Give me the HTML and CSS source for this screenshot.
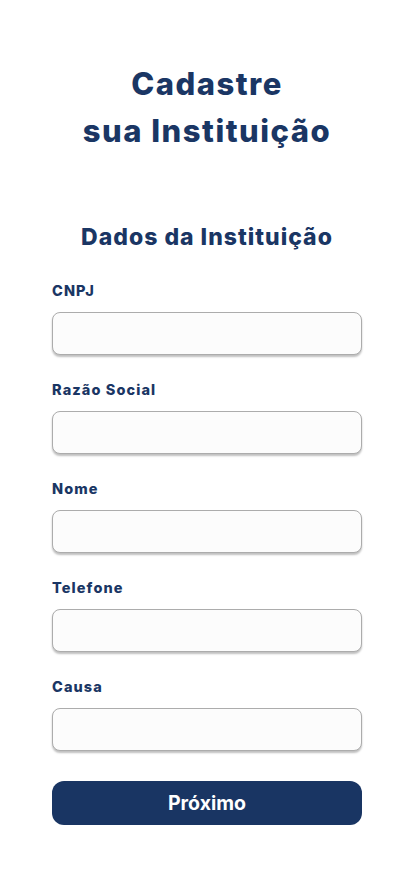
FILE: index.html
```html
<!DOCTYPE html>
<html lang="pt-BR">
<head>
<meta charset="utf-8">
<meta name="viewport" content="width=device-width, initial-scale=1">
<title>Cadastre sua Instituição</title>
<link rel="stylesheet" href="styles.css">
</head>
<body>
<main class="page">
  <h1 class="title">Cadastre<br>sua Instituição</h1>
  <form class="form">
    <h2 class="subtitle">Dados da Instituição</h2>
    <div class="field">
      <label class="label" for="cnpj">CNPJ</label>
      <input class="input" id="cnpj" type="text">
    </div>
    <div class="field">
      <label class="label" for="razao">Razão Social</label>
      <input class="input" id="razao" type="text">
    </div>
    <div class="field">
      <label class="label" for="nome">Nome</label>
      <input class="input" id="nome" type="text">
    </div>
    <div class="field">
      <label class="label" for="tel">Telefone</label>
      <input class="input" id="tel" type="text">
    </div>
    <div class="field">
      <label class="label" for="causa">Causa</label>
      <input class="input" id="causa" type="text">
    </div>
    <button class="button" type="button">Próximo</button>
  </form>
</main>
</body>
</html>
```
FILE: styles.css
```css
* { box-sizing: border-box; }
html, body { margin: 0; padding: 0; background: #ffffff; }
body { font-family: "Inter", "DejaVu Sans", sans-serif; color: #1a3664; }
.page { display: flex; flex-direction: column; align-items: center; padding: 60px 52px 40px; }
.title { margin: 0; font-size: 31px; line-height: 47px; font-weight: 800; letter-spacing: 1.5px; text-align: center; color: #1a3664; }
.form { width: 100%; display: flex; flex-direction: column; margin-top: 68px; }
.subtitle { margin: 0 0 30px; font-size: 23px; line-height: 30px; font-weight: 800; letter-spacing: 1px; text-align: center; color: #1a3664; }
.field { display: flex; flex-direction: column; gap: 12px; margin-bottom: 26px; }
.label { font-size: 14.5px; line-height: 18px; font-weight: 800; letter-spacing: 1.1px; color: #1a3664; }
.input { height: 43px; width: 100%; border: 1px solid #acacac; border-radius: 8px; background: #fcfcfc; box-shadow: 0 2px 2px rgba(0,0,0,0.25); }
.button { margin-top: 4px; height: 44px; width: 100%; border: none; border-radius: 12px; background: #193563; color: #ffffff; font-family: "Inter", "Roboto", sans-serif; font-size: 19.5px; font-weight: 700; }
```
